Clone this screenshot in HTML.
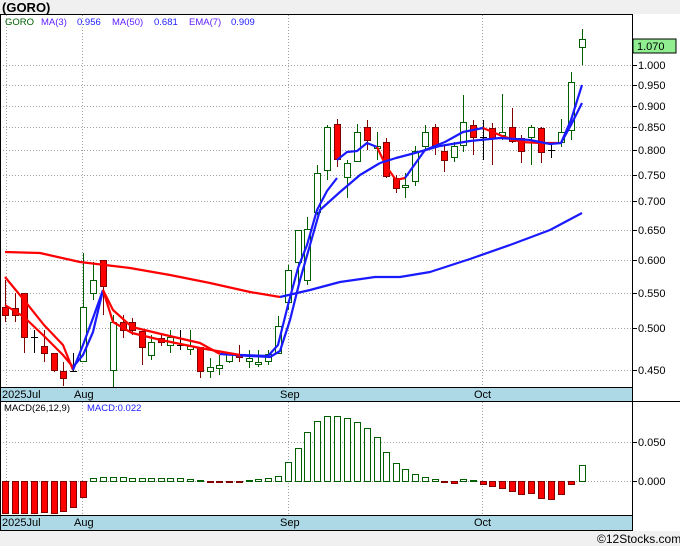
<!DOCTYPE html>
<html><head><meta charset="utf-8"><style>
body{margin:0;width:680px;height:546px;background:#f0f0f0;overflow:hidden;font-family:"Liberation Sans",sans-serif}
</style></head><body>
<svg id="s" width="680" height="546" xmlns="http://www.w3.org/2000/svg" style="position:absolute;left:0;top:0;font-family:'Liberation Sans',sans-serif">
<rect x="0" y="14" width="632" height="517" fill="#fff"/>
<rect x="632" y="14" width="48" height="517" fill="#fff"/>
<g id="grid" stroke="#a0a0a0" stroke-dasharray="1,2" stroke-width="1"></g>
<rect x="0" y="387" width="632" height="14" fill="#add8e6"/>
<rect x="0" y="515" width="632" height="16" fill="#add8e6"/>
<g id="c"></g>
<line x1="0" y1="14.5" x2="632" y2="14.5" stroke="#000"/>
<line x1="0.5" y1="14" x2="0.5" y2="531" stroke="#000"/>
<line x1="632.5" y1="14" x2="632.5" y2="531" stroke="#000"/>
<line x1="0" y1="387.5" x2="632" y2="387.5" stroke="#000"/>
<line x1="0" y1="401.5" x2="680" y2="401.5" stroke="#000"/>
<line x1="0" y1="515.5" x2="632" y2="515.5" stroke="#000"/>
<line x1="0" y1="530.5" x2="632" y2="530.5" stroke="#000"/>
<g id="ticks" stroke="#000"></g>
<text x="2" y="12" font-size="13" font-weight="bold">(GORO)</text>
<text x="5" y="25" font-size="9.5" fill="#006000">GORO</text>
<text x="41" y="25" font-size="9.5" fill="#6020ff">MA(3)</text>
<text x="77" y="25" font-size="9.5" fill="#2020ff">0.956</text>
<text x="112" y="25" font-size="9.5" fill="#6020ff">MA(50)</text>
<text x="154" y="25" font-size="9.5" fill="#2020ff">0.681</text>
<text x="189" y="25" font-size="9.5" fill="#6020ff">EMA(7)</text>
<text x="231" y="25" font-size="9.5" fill="#2020ff">0.909</text>
<text x="4" y="411" font-size="9.5" fill="#000">MACD(26,12,9)</text>
<text x="87" y="411" font-size="9.5" fill="#2020ff">MACD:0.022</text>
<g font-size="11" fill="#000">
<text x="2" y="398">2025Jul</text><text x="74" y="398">Aug</text><text x="280" y="398">Sep</text><text x="474" y="398">Oct</text>
<text x="2" y="526">2025Jul</text><text x="74" y="526">Aug</text><text x="280" y="526">Sep</text><text x="474" y="526">Oct</text>
<text x="638" y="69">1.000</text><text x="638" y="89">0.950</text><text x="638" y="110">0.900</text><text x="638" y="131">0.850</text><text x="638" y="154">0.800</text><text x="638" y="179">0.750</text><text x="638" y="205">0.700</text><text x="638" y="234">0.650</text><text x="638" y="264">0.600</text><text x="638" y="297">0.550</text><text x="638" y="332">0.500</text><text x="638" y="374">0.450</text>
<text x="638" y="446">0.050</text><text x="638" y="485">0.000</text>
<text x="597" y="543" font-size="12">©12Stocks.com</text>
</g>
<rect x="633" y="39" width="43" height="14" fill="#90ee90" stroke="#000"/>
<text x="637" y="50" font-size="11">1.070</text>
</svg>
<script>
var NS="http://www.w3.org/2000/svg";
function el(p,t,a){var e=document.createElementNS(NS,t);for(var k in a)e.setAttribute(k,a[k]);document.getElementById(p).appendChild(e);return e;}
[65,85,106,127,150,175,201,230,260,293,328,370,442,481].forEach(function(y){el("grid","line",{x1:0,x2:632,y1:y+.5,y2:y+.5});el("ticks","line",{x1:632,x2:637,y1:y+.5,y2:y+.5});});
[6,82,288,482].forEach(function(x){el("grid","line",{x1:x+.5,x2:x+.5,y1:15,y2:387});el("grid","line",{x1:x+.5,x2:x+.5,y1:402,y2:515});});
// x, top, bottom, hi, lo, type(g/r/d)
var C=[[5,307,315,280,322,'r'],[15,308,315,293,322,'r'],[24,293,337,293,353,'r'],[34,337,337,330,353,'d'],[44,346,353,330,362,'r'],[54,353,370,353,372,'r'],[63,371,378,362,386,'r'],[73,371,371,353,372,'d'],[83,307,361,253,361,'g'],[93,280,293,262,300,'g'],[103,260,286,260,315,'r'],[113,322,370,315,387,'g'],[123,322,330,315,338,'r'],[132,322,330,318,335,'r'],[142,331,347,331,365,'r'],[151,342,355,335,360,'g'],[161,338,342,335,346,'r'],[170,337,345,330,353,'g'],[180,345,345,330,350,'d'],[190,346,349,330,355,'g'],[200,347,371,347,378,'r'],[210,367,371,358,378,'g'],[219,365,368,355,375,'g'],[229,354,361,352,363,'g'],[239,354,357,345,362,'r'],[249,358,361,350,368,'g'],[258,362,364,350,367,'g'],[268,354,361,350,365,'g'],[278,326,353,316,353,'g'],[288,270,302,265,310,'g'],[298,230,262,230,283,'g'],[307,229,280,217,285,'g'],[317,173,212,165,215,'g'],[327,127,170,125,180,'g'],[337,124,159,119,167,'r'],[347,163,177,160,198,'g'],[357,132,161,124,162,'g'],[367,127,140,120,150,'r'],[377,146,148,132,160,'g'],[386,142,176,138,178,'r'],[396,178,188,175,193,'r'],[405,185,187,173,198,'g'],[415,151,181,146,186,'g'],[425,132,146,125,150,'g'],[435,127,145,124,155,'r'],[444,151,160,146,172,'r'],[454,146,157,142,162,'g'],[463,122,145,95,152,'g'],[473,125,137,120,155,'r'],[483,137,137,120,160,'d'],[492,128,138,123,165,'r'],[502,132,135,94,140,'g'],[512,127,141,108,143,'r'],[521,138,151,135,163,'r'],[531,127,137,125,165,'g'],[541,128,152,127,163,'r'],[551,150,150,145,158,'d'],[561,132,142,119,147,'g'],[571,82,130,72,140,'g'],[582,39,47,29,65,'g']];
C.forEach(function(c){var col=c[5]=='g'?'#006000':(c[5]=='r'?'#800000':'#000');
el("c","line",{x1:c[0]+.5,x2:c[0]+.5,y1:c[3],y2:c[4],stroke:col});
if(c[5]=='d'){el("c","line",{x1:c[0]-3,x2:c[0]+4,y1:c[1]+.5,y2:c[1]+.5,stroke:col});}
else el("c","rect",{x:c[0]-3+.5,y:c[1]+.5,width:6,height:Math.max(1,c[2]-c[1]),fill:c[5]=='g'?'#fff':'#ff0000',stroke:col});});
function pl(pts,col){el("c","polyline",{points:pts,fill:"none",stroke:col,"stroke-width":2.2,"stroke-linejoin":"round"});}
pl("5,252 40,253 80,262 130,268 170,275 210,283 250,292 280,297","#ff0000");
pl("280,297 310,290 340,282 375,277 400,277 430,272 470,259 510,245 550,230 582,213","#1a1aff");
pl("5,277 24,300 44,325 63,345 73,370","#ff0000");
pl("73,370 83,345 93,318 103,290","#1a1aff");
pl("103,290 113,310 132,327 161,334 200,343 220,354","#ff0000");
pl("220,354 250,356 270,357 280,351 290,320 300,280 310,245 320,210 340,192 360,175 380,163","#1a1aff");
pl("5,305 24,317 44,336 63,355 73,367","#ff0000");
pl("73,367 83,355 93,332 103,290","#1a1aff");
pl("103,290 113,322 132,333 161,340 200,348 240,355","#ff0000");
pl("240,355 268,356 278,345 288,305 298,268 307,245 317,210 327,191 337,178","#1a1aff");
pl("337,160 347,152 357,151 367,143 377,147","#1a1aff");
pl("377,147 386,166 396,180 405,178","#ff0000");
pl("405,178 415,164 425,150 435,146 445,142 463,132 483,128","#1a1aff");
pl("483,128 502,136 521,142 541,143 561,143","#ff0000");
pl("561,143 571,120 582,85","#1a1aff");
pl("380,163 396,158 415,153 440,146 470,141 500,138 530,140 550,144 561,143 571,125 582,103","#1a1aff");
var M=[[5,513],[15,513],[24,513],[34,513],[44,512],[54,513],[63,511],[73,507],[83,497],[93,478],[103,477],[113,477],[123,477],[132,478],[142,478],[151,478],[161,478],[170,478],[180,478],[190,479],[200,480],[210,482],[219,482],[229,482],[239,481],[249,480],[258,479],[268,478],[278,476],[288,462],[298,448],[307,432],[317,421],[327,416],[337,416],[347,418],[357,422],[367,428],[377,437],[386,452],[396,463],[405,469],[415,474],[425,477],[435,479],[444,482],[454,483],[463,479],[473,480],[483,484],[492,486],[502,488],[512,491],[521,494],[531,493],[541,498],[551,499],[561,494],[571,484],[582,465]];
M.forEach(function(m){var up=m[1]<481;var y0=Math.min(m[1],481),h=Math.max(1,Math.abs(m[1]-481));
el("c","rect",{x:m[0]-3+.5,y:y0+.5,width:6,height:h,fill:up?'#fff':'#ff0000',stroke:up?'#006000':'#800000'});});
</script>
</body></html>
